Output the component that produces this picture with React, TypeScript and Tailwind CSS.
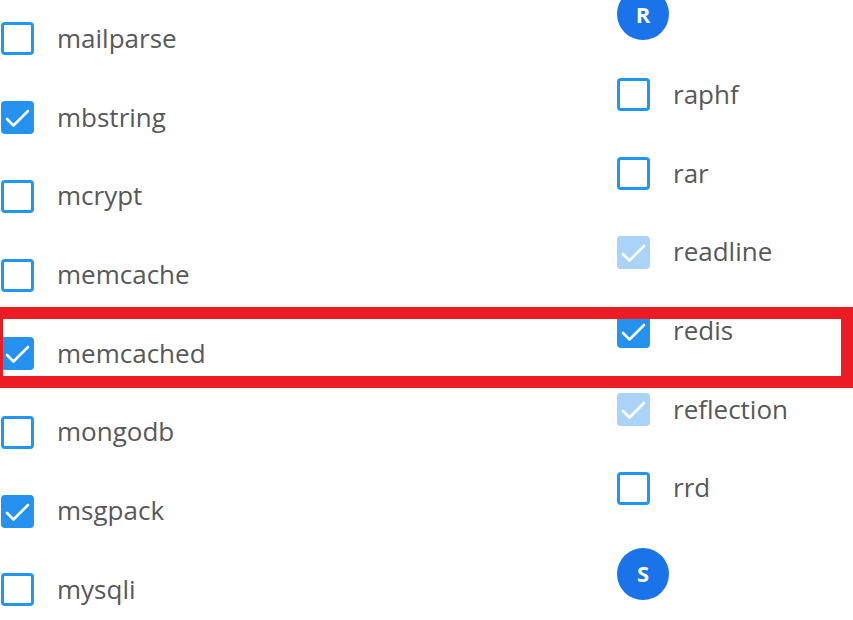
type Ext = { name: string; state: "off" | "on" | "locked" };

const leftList: Ext[] = [
  { name: "mailparse", state: "off" },
  { name: "mbstring", state: "on" },
  { name: "mcrypt", state: "off" },
  { name: "memcache", state: "off" },
  { name: "memcached", state: "on" },
  { name: "mongodb", state: "off" },
  { name: "msgpack", state: "on" },
  { name: "mysqli", state: "off" },
];

const rList: Ext[] = [
  { name: "raphf", state: "off" },
  { name: "rar", state: "off" },
  { name: "readline", state: "locked" },
  { name: "redis", state: "on" },
  { name: "reflection", state: "locked" },
  { name: "rrd", state: "off" },
];

function Check({ state }: { state: Ext["state"] }) {
  if (state === "off") {
    return <div className="w-[33px] h-[33px] shrink-0 rounded-[4px] border-[3px] border-[#2196f3] bg-white" />;
  }
  return (
    <div
      className={
        state === "on"
          ? "w-[33px] h-[33px] shrink-0 rounded-[4px] bg-[#2592f0] flex items-center justify-center"
          : "w-[33px] h-[33px] shrink-0 rounded-[4px] bg-[#a9d4f8] flex items-center justify-center"
      }
    >
      <svg width="33" height="33" viewBox="0 0 33 33" fill="none">
        <polyline points="6,18 12.5,24.5 27,10" stroke="white" strokeWidth="2.6" strokeLinecap="round" strokeLinejoin="round" />
      </svg>
    </div>
  );
}

function Row({ ext }: { ext: Ext }) {
  return (
    <div className="h-[78.7px] flex items-center gap-[23px]">
      <Check state={ext.state} />
      <span className="text-[26px] leading-none text-[#585858] -translate-y-[1px]">{ext.name}</span>
    </div>
  );
}

function Letter({ ch }: { ch: string }) {
  return (
    <div className="w-[52px] h-[52px] rounded-full bg-[#1a73e8] flex items-center justify-center text-white font-bold text-[22px]">
      {ch}
    </div>
  );
}

export default function App() {
  return (
    <div
      className="relative w-[853px] h-[620px] overflow-hidden bg-white"
      style={{ fontFamily: '"Open Sans", "Noto Sans", sans-serif' }}
    >
      <div className="flex">
        <div className="w-[617px] pl-[1px] -mt-[0.4px]">
          {leftList.map((e) => (
            <Row key={e.name} ext={e} />
          ))}
        </div>
        <div className="flex-1 -mt-[12px]">
          <Letter ch="R" />
          <div className="mt-[15.6px]">
            {rList.map((e) => (
              <Row key={e.name} ext={e} />
            ))}
          </div>
          <div className="mt-[20px]">
            <Letter ch="S" />
          </div>
        </div>
      </div>

      {/* highlight frame around the memcached / redis row */}
      <div className="absolute left-[-9px] right-0 top-[307px] h-[81px] border-[12px] border-[#ed1c24]" />
    </div>
  );
}
